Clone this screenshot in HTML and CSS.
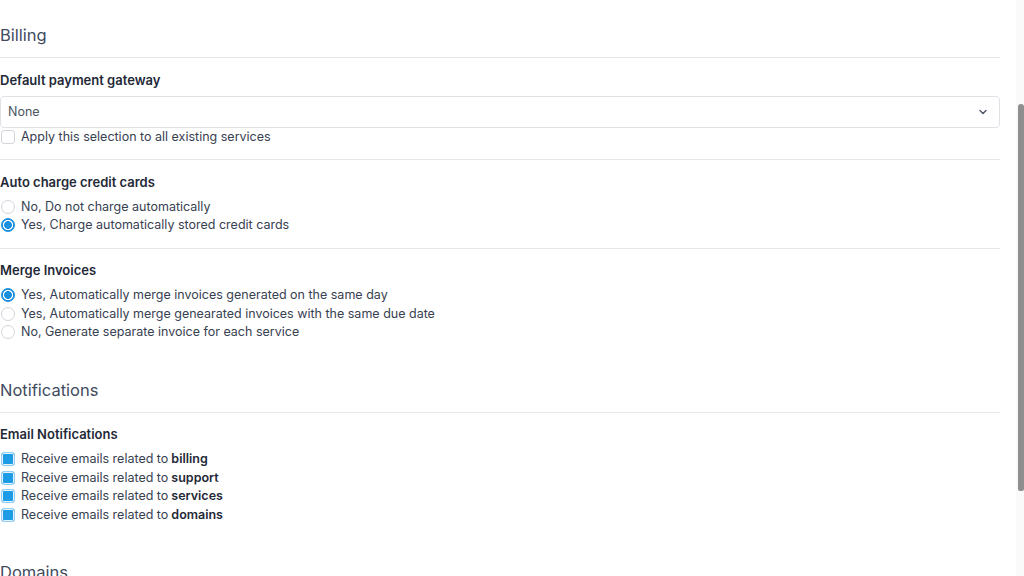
FILE: index.html
```html
<!DOCTYPE html>
<html lang="en">
<head>
    <meta charset="UTF-8">
    <title>Account Settings</title>
    <link rel="stylesheet" href="styles.css">
</head>
<body>
    <div class="page">
        <h2 class="section-title">Billing</h2>

        <div class="field">
            <label class="field-label">Default payment gateway</label>
            <div class="select">
                <span>None</span>
                <svg width="12" height="12" viewBox="0 0 12 12"><path d="M3 4.5l3 3 3-3" fill="none" stroke="#4b5563" stroke-width="1.4" stroke-linecap="round" stroke-linejoin="round"/></svg>
            </div>
            <label class="option"><input type="checkbox"> Apply this selection to all existing services</label>
        </div>

        <div class="field">
            <label class="field-label">Auto charge credit cards</label>
            <label class="option"><input type="radio" name="charge"> No, Do not charge automatically</label>
            <label class="option"><input type="radio" name="charge" checked> Yes, Charge automatically stored credit cards</label>
        </div>

        <div class="field last">
            <label class="field-label">Merge Invoices</label>
            <label class="option"><input type="radio" name="merge" checked> Yes, Automatically merge invoices generated on the same day</label>
            <label class="option"><input type="radio" name="merge"> Yes, Automatically merge genearated invoices with the same due date</label>
            <label class="option"><input type="radio" name="merge"> No, Generate separate invoice for each service</label>
        </div>

        <h2 class="section-title">Notifications</h2>

        <div class="field last">
            <label class="field-label">Email Notifications</label>
            <label class="option"><input type="checkbox" checked> Receive emails related to <b>billing</b></label>
            <label class="option"><input type="checkbox" checked> Receive emails related to <b>support</b></label>
            <label class="option"><input type="checkbox" checked> Receive emails related to <b>services</b></label>
            <label class="option"><input type="checkbox" checked> Receive emails related to <b>domains</b></label>
        </div>

        <h2 class="section-title">Domains</h2>
    </div>

    <div class="scrollbar"><div class="thumb"></div></div>
</body>
</html>
```

FILE: styles.css
```css
html, body { margin: 0; padding: 0; height: 100%; overflow: hidden; }
body { font-family: Inter, "Noto Sans", sans-serif; font-size: 12.5px; color: #374151; background: #fff; }
.page { width: 1000px; padding-top: 24px; }
.section-title { font-size: 16.5px; font-weight: 400; color: #3f4b5e; margin: 0; padding-bottom: 11px; border-bottom: 1px solid #e5e7eb; line-height: 22px; }
.field { padding: 13.5px 0 13px; border-bottom: 1px solid #e5e7eb; }
.field.last { border-bottom: none; padding-bottom: 37px; }
.field-label { display: block; font-size: 13px; font-weight: 600; color: #1f2937; margin-bottom: 8px; line-height: 16px; }
.select { height: 30px; border: 1px solid #dee2e6; border-radius: 4px; display: flex; align-items: center; justify-content: space-between; padding: 0 10px 0 7px; color: #4b5563; }
.option { display: flex; align-items: center; gap: 6px; line-height: 18.5px; color: #374151; }
.option b { font-weight: 600; color: #1f2937; margin-left: -3px; }
input { appearance: none; margin: 0 0 0 1px; width: 14px; height: 14px; border: 1px solid #d1d5db; background: #fff; flex: none; }
input[type=checkbox] { border-radius: 3px; }
input[type=radio] { border-radius: 50%; }
input[type=checkbox]:checked { border: 1.5px solid #90cdf4; background: #1d9be6; box-shadow: inset 0 0 0 1px #e6f3fc; }
input[type=radio]:checked { border: 1px solid #1a8fe0; background: radial-gradient(circle, #1a8fe0 0 3.6px, #fff 4.2px 4.8px, #1a8fe0 5.4px); }
.scrollbar { position: absolute; top: 0; right: 0; width: 8px; height: 100%; background: #fafafa; }
.thumb { margin-top: 104px; margin-left: 2px; height: 387px; background: #8e8e8e; border-radius: 3px 3px 2px 2px; }
```
